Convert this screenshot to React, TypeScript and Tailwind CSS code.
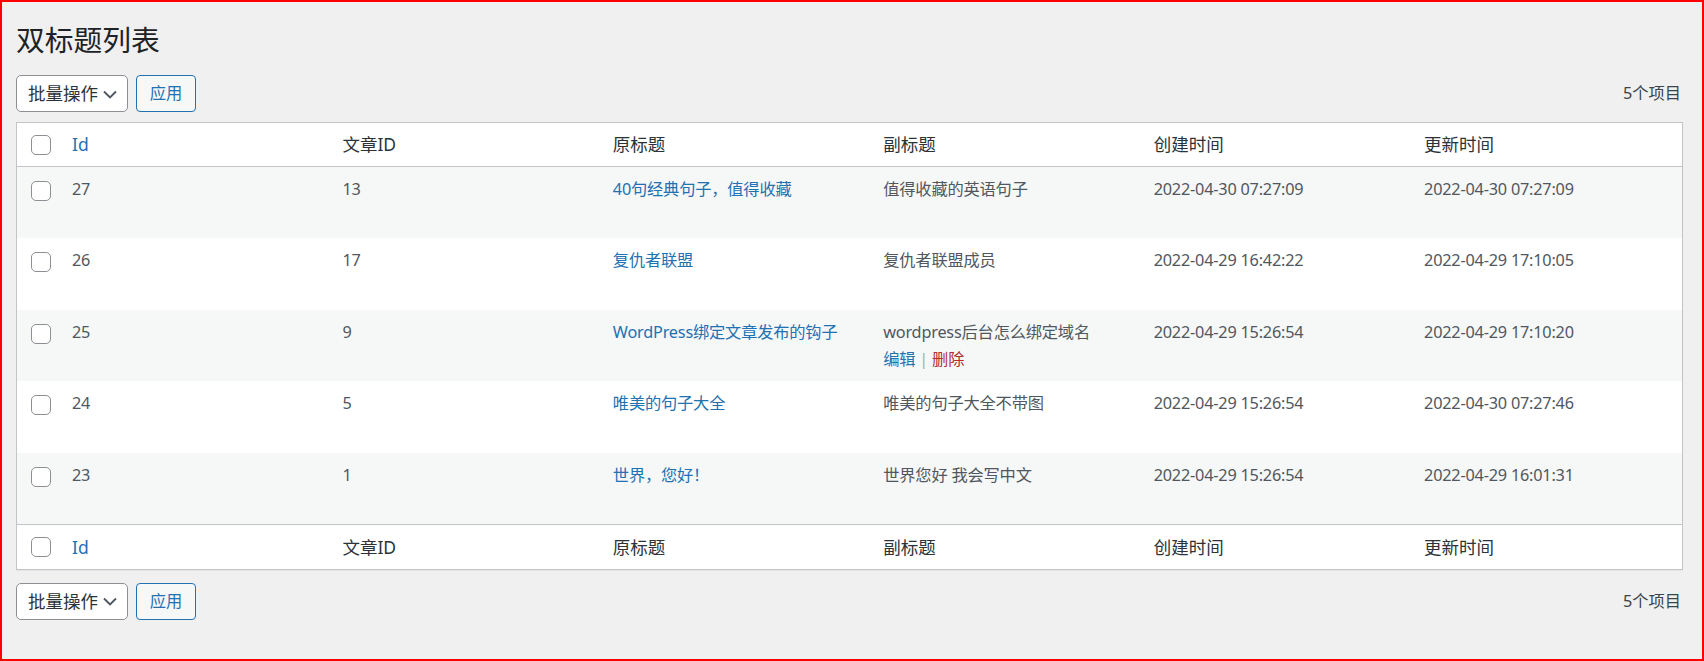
import React from "react";

type Row = {
  id: number;
  postId: number;
  title: string;
  subtitle: string;
  created: string;
  updated: string;
  actions?: boolean;
};

const rows: Row[] = [
  { id: 27, postId: 13, title: "40句经典句子，值得收藏", subtitle: "值得收藏的英语句子", created: "2022-04-30 07:27:09", updated: "2022-04-30 07:27:09" },
  { id: 26, postId: 17, title: "复仇者联盟", subtitle: "复仇者联盟成员", created: "2022-04-29 16:42:22", updated: "2022-04-29 17:10:05" },
  { id: 25, postId: 9, title: "WordPress绑定文章发布的钩子", subtitle: "wordpress后台怎么绑定域名", created: "2022-04-29 15:26:54", updated: "2022-04-29 17:10:20", actions: true },
  { id: 24, postId: 5, title: "唯美的句子大全", subtitle: "唯美的句子大全不带图", created: "2022-04-29 15:26:54", updated: "2022-04-30 07:27:46" },
  { id: 23, postId: 1, title: "世界，您好！", subtitle: "世界您好 我会写中文", created: "2022-04-29 15:26:54", updated: "2022-04-29 16:01:31" },
];

const grid = "grid grid-cols-[42.5px_repeat(6,minmax(0,1fr))]";

const Checkbox: React.FC = () => (
  <span className="block h-5 w-5 rounded-[5px] border border-[#8c8f94] bg-white" />
);

const Tablenav: React.FC = () => (
  <div className="flex h-[37px] items-center">
    <div className="flex h-[37px] w-[112px] items-center justify-between rounded-[5px] border border-[#8c8f94] bg-white pl-[11px] pr-[10px] text-[17.5px] text-[#2c3338]">
      <span>批量操作</span>
      <svg width="14" height="9" viewBox="0 0 14 9" fill="none" className="mt-[1px]">
        <path d="M1 1.5l6 6 6-6" stroke="#50575e" strokeWidth="1.9" />
      </svg>
    </div>
    <button className="ml-2 h-[37px] w-[60px] rounded-[4px] border border-[#2271b1] bg-[#f6f7f7] text-[16.25px] text-[#2271b1]">
      应用
    </button>
    <div className="flex-grow"></div>
    <span className="pr-[2px] text-[16.25px] text-[#3c434a]">5个项目</span>
  </div>
);

const HeadRow: React.FC<{ top?: boolean }> = ({ top }) => (
  <div
    className={`${grid} items-center bg-white text-[17.5px] text-[#2c3338] ${
      top ? "h-[44px] border-b border-[#c3c4c7]" : "h-[45px] border-t border-[#c3c4c7]"
    }`}
  >
    <div className="pl-[14px]">
      <Checkbox />
    </div>
    <div className="px-[12.5px] text-[#2271b1]">Id</div>
    <div className="px-[12.5px]">文章ID</div>
    <div className="px-[12.5px]">原标题</div>
    <div className="px-[12.5px]">副标题</div>
    <div className="px-[12.5px]">创建时间</div>
    <div className="px-[12.5px]">更新时间</div>
  </div>
);

export default function App() {
  return (
    <div className="h-[661px] overflow-hidden border-2 border-[#ff0000] bg-[#f0f0f1] pl-[14px] pr-[19px] pt-[19px] font-['Noto_Sans','Noto_Sans_CJK_SC',sans-serif]">
      <h1 className="text-[28.75px] font-normal leading-[37px] text-[#1d2327]">双标题列表</h1>

      <div className="mt-[17px]">
        <Tablenav />
      </div>

      <div className="mt-[10px] border border-[#c3c4c7] bg-white shadow-[0_1px_1px_rgba(0,0,0,0.04)]">
        <HeadRow top />
        {rows.map((r, i) => (
          <div
            key={r.id}
            className={`${grid} h-[71.4px] items-start text-[16.25px] leading-[24.4px] tracking-[-0.2px] text-[#50575e] ${
              i % 2 === 0 ? "bg-[#f6f7f7]" : "bg-white"
            }`}
          >
            <div className="pl-[14px] pt-[14px]">
              <Checkbox />
            </div>
            <div className="px-[12.5px] pt-[10px]">{r.id}</div>
            <div className="px-[12.5px] pt-[10px]">{r.postId}</div>
            <div className="px-[12.5px] pt-[10px] text-[#2271b1]">{r.title}</div>
            <div className="px-[12.5px] pt-[10px]">
              <div>{r.subtitle}</div>
              {r.actions && (
                <div className="pt-[2.5px]">
                  <span className="text-[#2271b1]">编辑</span>
                  <span className="px-[4px] text-[#a7aaad]">|</span>
                  <span className="text-[#b32d2e]">删除</span>
                </div>
              )}
            </div>
            <div className="px-[12.5px] pt-[10px]">{r.created}</div>
            <div className="px-[12.5px] pt-[10px]">{r.updated}</div>
          </div>
        ))}
        <HeadRow />
      </div>

      <div className="mt-[13px]">
        <Tablenav />
      </div>
    </div>
  );
}
